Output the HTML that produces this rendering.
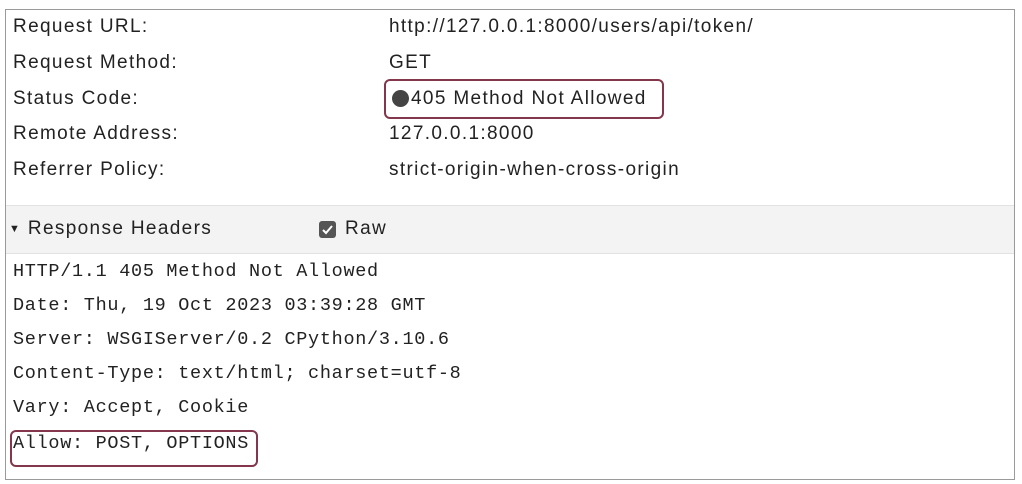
<!DOCTYPE html>
<html><head><style>
body{margin:0;width:1022px;height:484px;background:#fff;position:relative;overflow:hidden;font-family:"Liberation Sans",sans-serif;color:#222}
.box{position:absolute;left:5px;top:9px;width:1010px;height:471px;border:1px solid #9a9a9a;box-sizing:border-box}
.t{position:absolute;font-size:19px;letter-spacing:1.35px;line-height:22px;white-space:nowrap}
.m{position:absolute;left:13px;font-family:"Liberation Mono",monospace;font-size:18.5px;letter-spacing:0.7px;line-height:20px;white-space:nowrap;color:#222}
.band{position:absolute;left:6px;top:205px;width:1008px;height:47px;background:#f3f3f3;border-top:1px solid #e2e2e2;border-bottom:1px solid #e2e2e2}
.hl{position:absolute;border:2px solid #84364c;border-radius:6px;box-sizing:border-box}
</style></head><body>
<div class="box"></div>
<div class="band"></div>
<div class="t" style="left:13px;top:16px">Request URL:</div>
<div class="t" style="left:389px;top:16px">http://127.0.0.1:8000/users/api/token/</div>
<div class="t" style="left:13px;top:52px">Request Method:</div>
<div class="t" style="left:389px;top:52px">GET</div>
<div class="t" style="left:13px;top:88px">Status Code:</div>
<div class="hl" style="left:384px;top:79px;width:280px;height:40px"></div>
<div style="position:absolute;left:392px;top:90px;width:17px;height:17px;border-radius:50%;background:#444"></div>
<div class="t" style="left:411px;top:88px">405 Method Not Allowed</div>
<div class="t" style="left:13px;top:123px">Remote Address:</div>
<div class="t" style="left:389px;top:123px">127.0.0.1:8000</div>
<div class="t" style="left:13px;top:159px">Referrer Policy:</div>
<div class="t" style="left:389px;top:159px">strict-origin-when-cross-origin</div>
<div class="t" style="left:9px;top:218px"><span style="font-size:11px;position:relative;top:-2px">▼</span> Response Headers</div>
<div style="position:absolute;left:319px;top:221px;width:17px;height:17px;border-radius:3px;background:#555"><svg width="17" height="17"><path d="M4 9l3 3 6-7" stroke="#fff" stroke-width="2" fill="none"/></svg></div>
<div class="t" style="left:345px;top:218px">Raw</div>
<div class="m" style="top:262px">HTTP/1.1 405 Method Not Allowed</div>
<div class="m" style="top:296px">Date: Thu, 19 Oct 2023 03:39:28 GMT</div>
<div class="m" style="top:330px">Server: WSGIServer/0.2 CPython/3.10.6</div>
<div class="m" style="top:364px">Content-Type: text/html; charset=utf-8</div>
<div class="m" style="top:398px">Vary: Accept, Cookie</div>
<div class="hl" style="left:10px;top:430px;width:248px;height:37px"></div>
<div class="m" style="top:434px">Allow: POST, OPTIONS</div>
</body></html>
